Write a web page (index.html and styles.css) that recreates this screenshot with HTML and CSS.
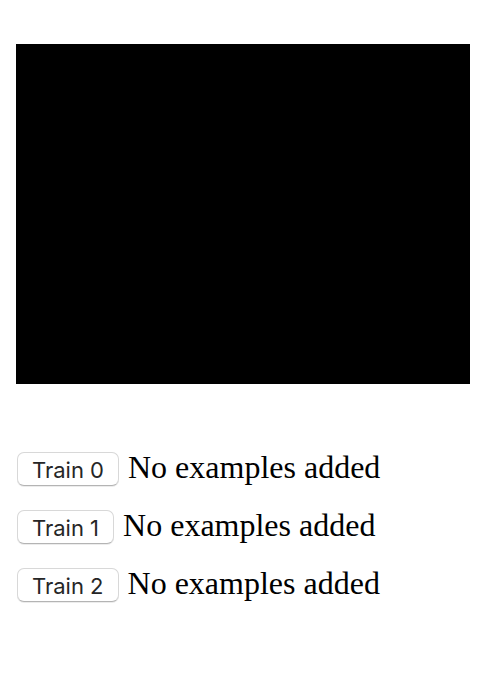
FILE: index.html
```html
<!DOCTYPE html>
<html lang="en">
<head>
<meta charset="utf-8">
<title>Train</title>
<link rel="stylesheet" href="styles.css">
</head>
<body>
<main class="page">
  <video class="video" aria-label="Camera"></video>
  <div class="rows">
    <div class="row"><button class="train" type="button">Train 0</button><span>No examples added</span></div>
    <div class="row"><button class="train" type="button">Train 1</button><span>No examples added</span></div>
    <div class="row"><button class="train" type="button">Train 2</button><span>No examples added</span></div>
  </div>
</main>
</body>
</html>
```
FILE: styles.css
```css
body {
  margin: 0;
  background: #fff;
  color: #000;
  font-family: "Liberation Serif", "Times New Roman", serif;
  font-size: 32px;
  line-height: 36px;
}

.page {
  padding: 44px 22px 44px 16px;
}

.video {
  display: block;
  width: 100%;
  aspect-ratio: 454 / 340;
  background: #000;
}

.rows {
  display: grid;
  gap: 21px;
  margin-top: 65px;
}

.row {
  display: flex;
  align-items: baseline;
  gap: 9px;
}

.train {
  height: 34px;
  margin: 0 0 0 1px;
  padding: 2px 14px 0;
  border: 1px solid #d8d8d8;
  border-bottom-color: #b4b4b4;
  border-radius: 7px;
  background: #fff;
  color: #262626;
  font-family: Inter, sans-serif;
  font-size: 22px;
  line-height: 30px;
  box-shadow: 0 1px 0 #ececec;
}
```
